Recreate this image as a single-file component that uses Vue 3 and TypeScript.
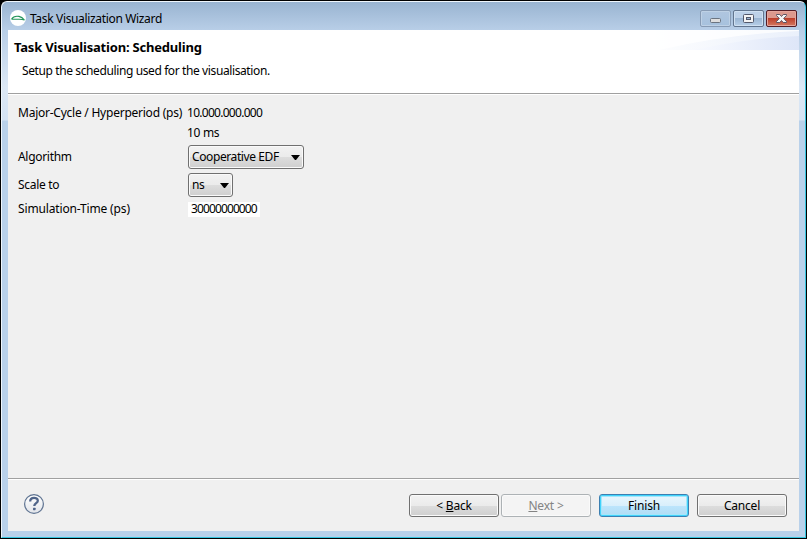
<script setup lang="ts">
import { ref } from 'vue'

const algorithm = ref('Cooperative EDF')
const scale = ref('ns')
const simulationTime = ref('30000000000')
</script>

<template>
  <div class="desktop">
    <div class="window">
      <header class="titlebar">
        <svg class="app-icon" width="16" height="16" viewBox="0 0 16 16">
          <circle cx="8" cy="8" r="8" fill="#fff" />
          <path d="M1.5 9.2C3 6.7 6 5.8 9 6.4C11.5 7 13.3 8.6 14.5 10C12.5 9.2 11 9.2 9 9.2H1.5" fill="none" stroke="#23955a" stroke-width="1.1" />
        </svg>
        <span class="caption">Task Visualization Wizard</span>
        <div class="controls">
          <span class="control minimize">
            <svg width="29" height="15" viewBox="0 0 29 15"><rect x="9.5" y="7.5" width="10" height="4" rx="1" fill="#dedede" stroke="#6b7480" /></svg>
          </span>
          <span class="control">
            <svg width="29" height="15" viewBox="0 0 29 15"><rect x="9.5" y="3.5" width="10" height="8" rx="1" fill="#f4f4f4" stroke="#54596b" /><rect x="12.5" y="6.5" width="4" height="2" fill="#9bb5d1" stroke="#54596b" /></svg>
          </span>
          <span class="control close">
            <svg width="29" height="15" viewBox="0 0 29 15"><path d="M9.5 3.5h3.3l1.7 2 1.7-2h3.3v1l-2.8 3 2.8 3v1h-3.3l-1.7-2-1.7 2H9.5v-1l2.8-3-2.8-3z" fill="#f5f5f5" stroke="#5d5564" stroke-linejoin="round" /></svg>
          </span>
        </div>
      </header>
      <main class="client">
        <section class="banner">
          <svg class="swoosh" width="160" height="20" viewBox="0 0 160 20">
            <defs>
              <linearGradient id="wash"><stop offset="0" stop-color="#fff" /><stop offset=".45" stop-color="#f4f7fe" /><stop offset="1" stop-color="#dee6f8" /></linearGradient>
              <linearGradient id="sheen"><stop offset="0" stop-color="#fff" /><stop offset="1" stop-color="#eaf0fb" /></linearGradient>
            </defs>
            <rect width="160" height="20" fill="url(#wash)" />
            <path d="M0 0H160V6Q110 8 55 20H0Z" fill="url(#sheen)" />
            <path d="M0 0H160V1Q90 4 20 20H0Z" fill="#fff" opacity=".75" />
          </svg>
          <h1>Task Visualisation: Scheduling</h1>
          <p>Setup the scheduling used for the visualisation.</p>
        </section>
        <section class="form">
          <div class="row"><span class="label period">Major-Cycle / Hyperperiod (ps)</span><span class="digits cycle">10.000.000.000</span></div>
          <div class="row millis"><span class="label"></span><span class="ms">10 ms</span></div>
          <div class="row algorithm"><span class="label">Algorithm</span>
            <button class="combo wide"><span>{{ algorithm }}</span><svg width="9" height="5" viewBox="0 0 9 5"><path d="M0 0H9L5 5H4Z" /></svg></button>
          </div>
          <div class="row scale"><span class="label scale-label">Scale to</span>
            <button class="combo narrow"><span>{{ scale }}</span><svg width="9" height="5" viewBox="0 0 9 5"><path d="M0 0H9L5 5H4Z" /></svg></button>
          </div>
          <div class="row simulation"><span class="label sim-label">Simulation-Time (ps)</span><input v-model="simulationTime" class="digits" /></div>
        </section>
        <footer class="footer">
          <svg class="help" width="22" height="22" viewBox="0 0 22 22">
            <defs><linearGradient id="disc" x2="0" y2="1"><stop offset="0" stop-color="#fff" /><stop offset="1" stop-color="#e2e5ea" /></linearGradient></defs>
            <circle cx="11" cy="11" r="9.4" fill="url(#disc)" stroke="#5e7391" stroke-width="1.2" />
            <path d="M7.2 8.4C7.2 3.8 14.8 3.9 14.8 7.7C14.8 10.1 11.3 10.2 11.3 13" fill="none" stroke="#50658a" stroke-width="2.3" />
            <rect x="10" y="14.7" width="2.6" height="2.5" rx=".6" fill="#50658a" />
          </svg>
          <button class="btn back"><span>&lt; <u>B</u>ack</span></button>
          <button class="btn next" disabled><span><u>N</u>ext &gt;</span></button>
          <button class="btn finish"><span>Finish</span></button>
          <button class="btn cancel"><span>Cancel</span></button>
        </footer>
      </main>
    </div>
  </div>
</template>

<style>
body { margin: 0; overflow: hidden; }
</style>

<style scoped>
.desktop, .desktop * { box-sizing: border-box; }
.desktop {
  width: 807px; height: 539px; background: #000; padding: 1px;
  font: 12px/16px "Noto Sans", "Open Sans", sans-serif; color: #000;
}
.window {
  height: 537px; width: 805px; border: 1px solid #eff6fc; border-right-color: #36c5df; border-bottom-color: #36c5df;
  border-radius: 6px 6px 0 0; padding: 0 5px 6px 6px;
  background: linear-gradient(#99b4d1 0, #b8cee7 28px, #dce8f5 85px, #d5e3f3 118px, #b9d1ea 119px);
}
.titlebar { height: 28px; display: flex; align-items: flex-start; padding: 8px 0 0 2px; }
.app-icon { flex: none; }
.caption { margin: 1px auto 0 4px; white-space: nowrap; letter-spacing: -.34px; }
.controls { display: flex; gap: 2px; margin-right: 3px; }
.control {
  width: 31px; height: 17px; border: 1px solid #62758e; border-radius: 2px; display: flex;
  box-shadow: inset 0 0 0 1px #cfe0f1; background: linear-gradient(#bdd1e8 48%, #9bb6d3 50%, #b8d0e8);
}
.minimize { border-color: #879bb4; background: linear-gradient(#b0c6df, #a6c1dd); box-shadow: inset 0 0 0 1px #bed1e5; }
.close { border-color: #531d26; background: linear-gradient(#dc998e 46%, #bd3f2b 50%, #d47961); box-shadow: inset 0 0 0 1px #e5a69c; }
.client { height: 501px; width: 791px; background: #f0f0f0; display: flex; flex-direction: column; }
.banner { position: relative; height: 64px; background: #fff; border-bottom: 1px solid #a0a0a0; padding: 9px 0 0 6px; flex: none; box-shadow: 0 1px #fff; }
.swoosh { position: absolute; right: 0; top: 0; }
h1 { position: relative; margin: 0; font-size: 13px; line-height: 16px; font-weight: 700; white-space: nowrap; letter-spacing: -.2px; }
p { margin: 8px 0 0 8px; line-height: 16px; white-space: nowrap; letter-spacing: -.39px; }
.form { padding: 11px 0 0 10px; flex: 1; }
.row { display: flex; align-items: center; height: 16px; white-space: nowrap; }
.label { width: 169px; flex: none; letter-spacing: -.3px; }
.label.period { letter-spacing: -.24px; }
.label.sim-label { letter-spacing: -.15px; }
.digits { letter-spacing: -.88px; }
.digits.cycle { letter-spacing: -.72px; }
.ms { letter-spacing: -.3px; }
.millis { margin-top: 4px; }
.algorithm { height: 24px; margin-top: 4px; }
.scale { height: 24px; margin-top: 4px; }
.simulation { margin-top: 4px; }
.combo {
  margin-left: 1px; height: 24px; border: 1px solid #707070; border-radius: 3px; padding: 0 3px;
  display: flex; align-items: center; justify-content: space-between; font: inherit; color: #000;
  background: linear-gradient(#f2f2f2, #ebebeb 50%, #dddddd 51%, #cfcfcf); box-shadow: inset 0 0 0 1px #fafafa;
}
.combo svg { margin-top: 1px; }
.wide { width: 116px; letter-spacing: -.4px; }
.narrow { width: 45px; letter-spacing: -.3px; }
input { width: 72px; height: 15px; margin-left: 1px; border: 0; padding: 0 0 0 3px; background: #fff; font: inherit; outline: 0; }
.footer { height: 53px; border-top: 1px solid #a0a0a0; box-shadow: inset 0 1px #fff; display: flex; align-items: flex-start; padding: 15px 12px 0 15px; flex: none; }
.help { margin: -1px auto 0 0; }
.btn {
  width: 90px; height: 23px; border: 1px solid #707070; border-radius: 3px; padding: 0; font: inherit; color: #000; letter-spacing: -.2px;
  display: flex; align-items: center; justify-content: center;
  background: linear-gradient(#f2f2f2, #ebebeb 50%, #dddddd 51%, #cfcfcf); box-shadow: inset 0 0 0 1px #fafafa;
}
.btn span { padding-top: 1px; }
.next { margin-left: 2px; border-color: #adb2b5; color: #838383; background: #f4f4f4; }
.finish { margin-left: 8px; border-color: #3c7fb1; background: linear-gradient(#e9f6fd, #d9effb 50%, #bce5fc 51%, #b0dcf4); box-shadow: inset 0 0 0 1px #40d3fb, inset 0 0 0 2px #a5e6fb; }
.cancel { margin-left: 8px; }
u { text-underline-offset: 1px; text-decoration-thickness: 1px; text-decoration-skip-ink: none; }
</style>
